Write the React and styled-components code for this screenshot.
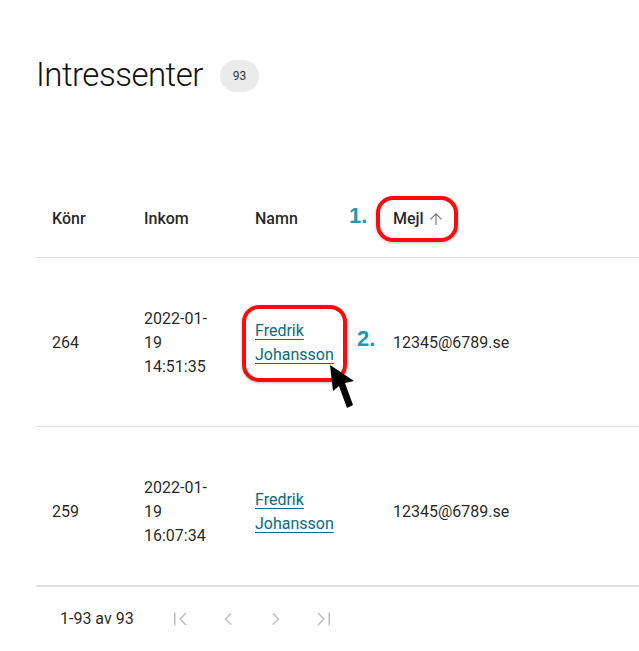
import React from "react";
import styled, { createGlobalStyle } from "styled-components";

const Global = createGlobalStyle`
  html, body { margin: 0; padding: 0; background: #fff; overflow: hidden; }
  body { font-family: Roboto, "Noto Sans", Arial, sans-serif; color: rgba(0,0,0,0.87); }
`;

const Page = styled.div`
  position: relative;
  width: 639px;
  height: 651px;
  padding: 55px 0 0 36px;
  box-sizing: border-box;
`;

const TitleRow = styled.div`
  display: flex;
  align-items: center;
  gap: 17px;
  height: 40px;
`;

const Title = styled.h1`
  margin: 0;
  font-size: 33px;
  font-weight: 300;
  line-height: 40px;
  color: #111;
  letter-spacing: -0.5px;
`;

const Badge = styled.span`
  display: inline-flex;
  align-items: center;
  justify-content: center;
  width: 39px;
  height: 32px;
  border-radius: 16px;
  background: #ebebeb;
  font-size: 12px;
  color: #333;
  margin-top: 1px;
`;

const TableWrap = styled.div`
  margin-top: 82px;
  width: 640px;
  height: 408px;
  overflow: hidden;
`;

const Table = styled.table`
  width: 100%;
  border-collapse: collapse;
  table-layout: fixed;
`;

const Th = styled.th`
  text-align: left;
  font-size: 16px;
  font-weight: 500;
  line-height: 24px;
  padding: 30px 16px 26px;
  border-bottom: 1px solid #e0e0e0;
  color: rgba(0,0,0,0.87);
  width: ${(p) => (p.$w ? `${p.$w}px` : "auto")};
  box-sizing: border-box;
`;

const SortLabel = styled.span`
  display: inline-flex;
  align-items: center;
  gap: 3px;
`;

const Td = styled.td`
  font-size: 16px;
  line-height: 24px;
  padding: 49px 16px 47px;
  border-bottom: 1px solid #e0e0e0;
  vertical-align: middle;
  color: rgba(0,0,0,0.87);
  word-wrap: break-word;
`;

const NameLink = styled.a`
  color: #0b6b78;
  text-decoration: underline;
  text-underline-offset: 3px;
  text-decoration-thickness: 1px;
  cursor: pointer;
`;

const Footer = styled.div`
  width: 603px;
  border-top: 2px solid #e0e0e0;
  display: flex;
  align-items: center;
  height: 62px;
  padding: 4px 0 0 24px;
  box-sizing: border-box;
`;

const Count = styled.span`
  font-size: 16px;
  line-height: 24px;
  color: rgba(0,0,0,0.87);
  margin-right: 22px;
`;

const PageBtn = styled.button`
  width: 48px;
  height: 48px;
  border: 0;
  background: none;
  padding: 0;
  display: inline-flex;
  align-items: center;
  justify-content: center;
  color: #bdbdbd;
`;

const Frame = styled.div`
  position: absolute;
  left: ${(p) => p.$x}px;
  top: ${(p) => p.$y}px;
  width: ${(p) => p.$w}px;
  height: ${(p) => p.$h}px;
  border: 4px solid #ff0a0a;
  border-radius: 17px;
  box-sizing: border-box;
  box-shadow: 0 1px 3px rgba(0,0,0,0.25);
  pointer-events: none;
`;

const Step = styled.span`
  position: absolute;
  left: ${(p) => p.$x}px;
  top: ${(p) => p.$y}px;
  font-family: "Liberation Sans", Arial, sans-serif;
  font-weight: 700;
  font-size: 22px;
  line-height: 24px;
  color: #1c9aae;
`;

const Cursor = styled.svg`
  position: absolute;
  left: 326px;
  top: 360px;
`;

const Icon = ({ d }) => (
  <svg width="24" height="24" viewBox="0 0 24 24" fill="none" stroke="currentColor" strokeWidth="1.5" strokeLinecap="square">
    <path d={d} />
  </svg>
);

const rows = [
  { nr: "264", date: "2022-01-19 14:51:35", name: "Fredrik Johansson", mail: "12345@6789.se" },
  { nr: "259", date: "2022-01-19 16:07:34", name: "Fredrik Johansson", mail: "12345@6789.se" },
];

export default function App() {
  return (
    <>
      <Global />
      <Page>
        <TitleRow>
          <Title>Intressenter</Title>
          <Badge>93</Badge>
        </TitleRow>
        <TableWrap>
          <Table>
            <thead>
              <tr>
                <Th $w={92}>Könr</Th>
                <Th $w={111}>Inkom</Th>
                <Th $w={138}>Namn</Th>
                <Th>
                  <SortLabel>
                    Mejl
                    <svg width="18" height="18" viewBox="0 0 24 24" fill="#757575">
                      <path d="M4 12l1.06 1.06L11.25 6.9V20h1.5V6.9l6.18 6.16L20 12l-8-8-8 8z" />
                    </svg>
                  </SortLabel>
                </Th>
              </tr>
            </thead>
            <tbody>
              {rows.map((r, i) => (
                <tr key={i}>
                  <Td>{r.nr}</Td>
                  <Td>{r.date}</Td>
                  <Td>
                    <NameLink>{r.name}</NameLink>
                  </Td>
                  <Td>{r.mail}</Td>
                </tr>
              ))}
            </tbody>
          </Table>
        </TableWrap>
        <Footer>
          <Count>1-93 av 93</Count>
          <PageBtn><Icon d="M17.5 6.5L12 12l5.5 5.5M6.75 6.5v11" /></PageBtn>
          <PageBtn><Icon d="M14.5 7L9.5 12l5 5" /></PageBtn>
          <PageBtn><Icon d="M9.5 7l5 5-5 5" /></PageBtn>
          <PageBtn><Icon d="M6.5 6.5L12 12l-5.5 5.5M17.25 6.5v11" /></PageBtn>
        </Footer>

        <Step $x={349} $y={204}>1.</Step>
        <Frame $x={376} $y={196} $w={82} $h={46} />
        <Step $x={357} $y={327}>2.</Step>
        <Frame $x={242} $y={305} $w={105} $h={77} />
        <Cursor width="34" height="52" viewBox="0 0 34 52">
          <polygon points="4,5 28,21 19,23 27,45 21,48 13,26 7,31" fill="#000" />
        </Cursor>
      </Page>
    </>
  );
}
